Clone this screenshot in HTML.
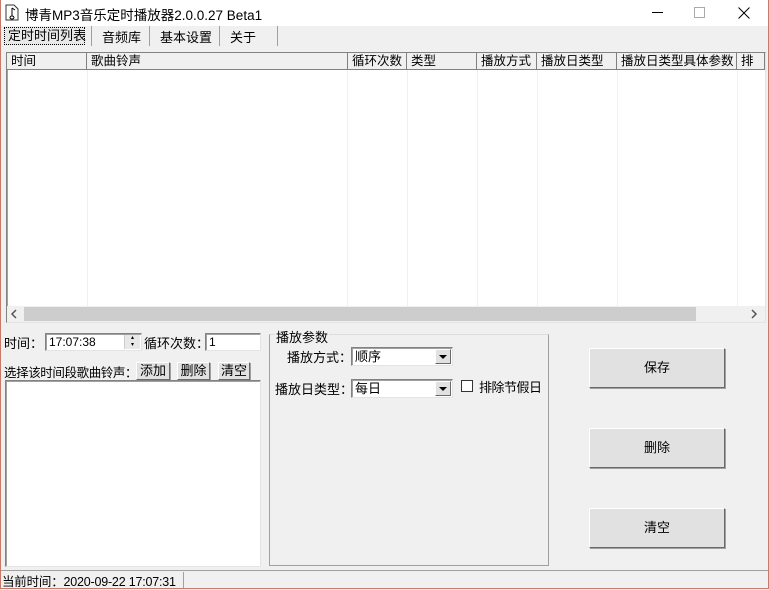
<!DOCTYPE html>
<html><head><meta charset="utf-8"><style>
*{margin:0;padding:0;box-sizing:border-box}
body{width:769px;height:589px;background:#f0f0f0;font:12px "Liberation Sans","Noto Sans CJK SC",sans-serif;color:#000;position:relative;overflow:hidden}
.a{position:absolute;white-space:nowrap}
.btn{position:absolute;background:#e1e1e1;border:1px solid #fff;border-right-color:#696969;border-bottom-color:#696969;box-shadow:1px 1px 0 #a0a0a0;text-align:center}
.sunk{position:absolute;background:#fff;border:1px solid #828282;border-right-color:#e3e3e3;border-bottom-color:#e3e3e3;box-shadow:inset 1px 1px 0 #a0a0a0}
.hd{position:absolute;top:53px;height:17px;background:#f0f0f0;border-right:1px solid #808080;border-bottom:1px solid #808080;padding-left:4px;line-height:16px;font-size:12.5px;overflow:hidden}
.vl{position:absolute;top:70px;height:236px;width:1px;background:#f0f0f0}
.cb{position:absolute;width:16px;height:15px;right:1px;top:1px;background:#e1e1e1;border:1px solid #fff;border-right-color:#696969;border-bottom-color:#696969}
.cb:after{content:"";position:absolute;left:3px;top:5px;border:4px solid transparent;border-top:4px solid #000;border-bottom:0}
</style></head><body>
<div class="a" style="left:0;top:0;width:769px;height:26px;background:#fff"></div>
<svg class="a" style="left:5px;top:4px" width="14" height="17"><path d="M1 1h8l4 4v11H1z" fill="#fff" stroke="#333"/><path d="M7 4v8M7 12a2 1.5 0 1 1-.1 0M7 4l3 2" stroke="#000" fill="none"/></svg>
<div class="a" style="left:25px;top:4px;font-size:13.5px">博青MP3音乐定时播放器2.0.0.27 Beta1</div>
<div class="a" style="left:652px;top:12px;width:11px;height:1px;background:#000"></div>
<div class="a" style="left:694px;top:7px;width:11px;height:11px;border:1px solid #aaa"></div>
<svg class="a" style="left:738px;top:7px" width="12" height="12"><path d="M0.5 0.5l11 11M11.5 0.5l-11 11" stroke="#000"/></svg>
<div class="a" style="left:4px;top:27px;width:81px;height:18px;border:1px dotted #000;background:#e8e8e8;padding-left:3px;line-height:16px;font-size:13px">定时时间列表</div>
<div class="a" style="left:91px;top:26px;width:1px;height:20px;background:#a0a0a0"></div>
<div class="a" style="left:102px;top:27px;font-size:13px">音频库</div>
<div class="a" style="left:149px;top:26px;width:1px;height:20px;background:#a0a0a0"></div>
<div class="a" style="left:160px;top:27px;font-size:13px">基本设置</div>
<div class="a" style="left:219px;top:26px;width:1px;height:20px;background:#a0a0a0"></div>
<div class="a" style="left:230px;top:27px;font-size:13px">关于</div>
<div class="a" style="left:277px;top:26px;width:1px;height:20px;background:#a0a0a0"></div>
<div class="sunk" style="left:6px;top:52px;width:760px;height:271px"></div>
<div class="hd" style="left:7px;width:80px">时间</div>
<div class="hd" style="left:87px;width:261px">歌曲铃声</div>
<div class="hd" style="left:348px;width:59px">循环次数</div>
<div class="hd" style="left:407px;width:70px">类型</div>
<div class="hd" style="left:477px;width:60px">播放方式</div>
<div class="hd" style="left:537px;width:80px">播放日类型</div>
<div class="hd" style="left:617px;width:120px">播放日类型具体参数</div>
<div class="hd" style="left:737px;width:28px">排除</div>
<div class="vl" style="left:87px"></div><div class="vl" style="left:347px"></div><div class="vl" style="left:407px"></div><div class="vl" style="left:477px"></div><div class="vl" style="left:537px"></div><div class="vl" style="left:617px"></div><div class="vl" style="left:737px"></div>
<div class="a" style="left:7px;top:306px;width:758px;height:16px;background:#f0f0f0"></div>
<div class="a" style="left:24px;top:307px;width:672px;height:14px;background:#cdcdcd"></div>
<svg class="a" style="left:10px;top:309px" width="8" height="10"><path d="M6 1L2 5l4 4" stroke="#555" stroke-width="1.5" fill="none"/></svg>
<svg class="a" style="left:750px;top:309px" width="8" height="10"><path d="M2 1l4 4-4 4" stroke="#555" stroke-width="1.5" fill="none"/></svg>
<div class="a" style="left:4px;top:333px;font-size:13px">时间：</div>
<div class="sunk" style="left:45px;top:333px;width:97px;height:18px;padding:2px 3px;line-height:13px">17:07:38</div>
<div class="a" style="left:124px;top:335px;width:16px;height:14px;background:#e8e8e8;border-left:1px solid #ccc;font-size:6px;text-align:center;line-height:7px">▴<br>▾</div>
<div class="a" style="left:144px;top:333px;font-size:13px">循环次数：</div>
<div class="sunk" style="left:205px;top:333px;width:56px;height:18px;padding:2px 3px;line-height:13px">1</div>
<div class="a" style="left:4px;top:362px;font-size:12.5px;letter-spacing:-0.4px">选择该时间段歌曲铃声：</div>
<div class="btn" style="left:136px;top:362px;width:34px;height:18px;line-height:15px;font-size:13px">添加</div>
<div class="btn" style="left:177px;top:362px;width:33px;height:18px;line-height:15px;font-size:13px">删除</div>
<div class="btn" style="left:218px;top:362px;width:32px;height:18px;line-height:15px;font-size:13px">清空</div>
<div class="sunk" style="left:5px;top:380px;width:256px;height:187px"></div>
<div class="a" style="left:269px;top:334px;width:280px;height:232px;border:1px solid #a0a0a0;border-top-color:#dcdcdc"></div>
<div class="a" style="left:275px;top:327px;background:#f0f0f0;padding:0 1px;font-size:13px">播放参数</div>
<div class="a" style="left:287px;top:347px;font-size:13px">播放方式：</div>
<div class="sunk" style="left:351px;top:347px;width:102px;height:19px;padding:1px 3px;font-size:13px;line-height:15px">顺序<div class="cb"></div></div>
<div class="a" style="left:275px;top:379px;font-size:13px">播放日类型：</div>
<div class="sunk" style="left:351px;top:379px;width:102px;height:19px;padding:1px 3px;font-size:13px;line-height:15px">每日<div class="cb"></div></div>
<div class="a" style="left:461px;top:380px;width:12px;height:12px;background:#fff;border:1px solid #333"></div>
<div class="a" style="left:479px;top:377px;font-size:13px;letter-spacing:-0.5px">排除节假日</div>
<div class="btn" style="left:589px;top:348px;width:136px;height:40px;line-height:38px;font-size:13px">保存</div>
<div class="btn" style="left:589px;top:428px;width:136px;height:40px;line-height:38px;font-size:13px">删除</div>
<div class="btn" style="left:589px;top:508px;width:136px;height:40px;line-height:38px;font-size:13px">清空</div>
<div class="a" style="left:0;top:570px;width:769px;height:1px;background:#a0a0a0"></div>
<div class="a" style="left:2px;top:571px;font-size:12.5px;letter-spacing:-0.2px">当前时间：2020-09-22 17:07:31</div>
<div class="a" style="left:183px;top:572px;width:1px;height:16px;background:#a0a0a0"></div>
<div class="a" style="left:0;top:0;width:769px;height:589px;border:1px solid #c87a6a;border-top:0"></div>
</body></html>
